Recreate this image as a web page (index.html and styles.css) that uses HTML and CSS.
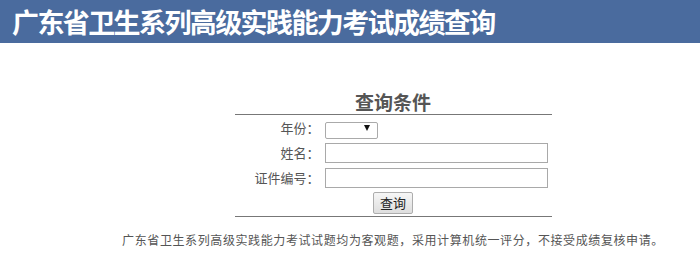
FILE: index.html
```html
<!DOCTYPE html>
<html lang="zh-CN">
  <head>
    <meta charset="UTF-8" />
    <title>广东省卫生系列高级实践能力考试成绩查询</title>
    <link rel="stylesheet" href="styles.css">
  </head>
  <body>
    <header class="banner">
      <h1>广东省卫生系列高级实践能力考试成绩查询</h1>
    </header>

    <main class="content">
      <form class="query-form">
        <h2 class="query-title">查询条件</h2>
        <div class="form-row">
          <label for="year">年份：</label>
          <span class="select-wrap">
            <select id="year" name="year" class="year-select">
              <option value=""></option>
            </select>
          </span>
        </div>
        <div class="form-row">
          <label for="name">姓名：</label>
          <input id="name" type="text" name="name" class="text-input">
        </div>
        <div class="form-row">
          <label for="idno">证件编号：</label>
          <input id="idno" type="text" name="idno" class="text-input">
        </div>
        <div class="form-row form-actions">
          <button type="submit" class="submit-btn">查询</button>
        </div>
      </form>

      <p class="notice">广东省卫生系列高级实践能力考试试题均为客观题，采用计算机统一评分，不接受成绩复核申请。</p>
    </main>
  </body>
</html>
```

FILE: styles.css
```css
* {
  box-sizing: border-box;
}

body {
  margin: 0;
  background: #fff;
  color: #555;
  font-family: "Noto Sans CJK SC", "Noto Sans", sans-serif;
  font-size: 13px;
}

.banner {
  height: 43px;
  background: #4a6b9e;
  padding-left: 12px;
}

.banner h1 {
  margin: 0;
  color: #fff;
  font-size: 27px;
  line-height: 43px;
  font-weight: 700;
  letter-spacing: -1.6px;
}

.content {
  padding-left: 86px;
  padding-top: 47px;
}

.query-form {
  width: 317px;
  margin: 0 auto;
  border-bottom: 1px solid #777;
  padding-bottom: 1px;
}

.query-title {
  margin: 0;
  text-align: center;
  font-size: 19px;
  line-height: 24px;
  font-weight: 700;
  color: #555;
  border-bottom: 1px solid #777;
}

.form-row {
  display: flex;
  align-items: center;
  height: 25px;
}

.form-row label {
  width: 87px;
  text-align: right;
  padding-right: 2px;
  margin-right: 3px;
  color: #555;
}

.select-wrap {
  position: relative;
  display: inline-block;
  width: 53px;
  height: 17px;
}

.select-wrap::after {
  content: "";
  position: absolute;
  right: 8px;
  top: 6px;
  border-left: 3px solid transparent;
  border-right: 3px solid transparent;
  border-top: 6px solid #111;
  pointer-events: none;
}

.year-select {
  -webkit-appearance: none;
  appearance: none;
  width: 53px;
  height: 17px;
  font-size: 11px;
  border: 1px solid #aaa;
  border-radius: 2px;
  background: #fff;
  padding: 0;
}

.text-input {
  width: 223px;
  height: 20px;
  border: 1px solid #a9a9a9;
  padding: 1px 2px;
  font-size: 13px;
}

.form-actions {
  justify-content: center;
}

.submit-btn {
  width: 40px;
  height: 22px;
  padding: 0;
  font-family: inherit;
  font-size: 13px;
  color: #222;
  background: linear-gradient(#f6f6f6, #dedede);
  border: 1px solid #adadad;
  border-radius: 2px;
}

.notice {
  margin: 15px 0 0;
  text-align: center;
  font-size: 12px;
  line-height: 16px;
  letter-spacing: 0.6px;
  color: #555;
}
```
